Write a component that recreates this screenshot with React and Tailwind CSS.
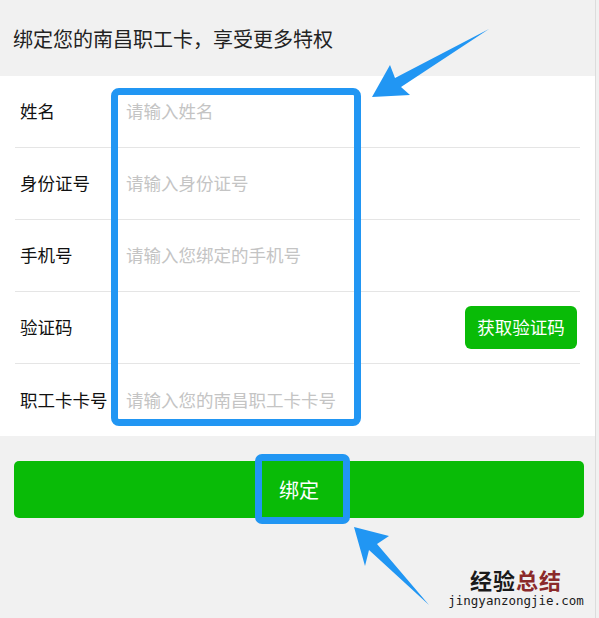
import React from 'react';

const rows = [
  { label: '姓名', placeholder: '请输入姓名' },
  { label: '身份证号', placeholder: '请输入身份证号' },
  { label: '手机号', placeholder: '请输入您绑定的手机号' },
  { label: '验证码', placeholder: '', code: true },
  { label: '职工卡卡号', placeholder: '请输入您的南昌职工卡卡号' },
];

const App = () => {
  return (
    <div
      className="relative w-[599px] h-[618px] overflow-hidden bg-[#f1f1f1] text-[#111]"
      style={{ fontFamily: '"Noto Sans CJK SC", "Noto Sans", sans-serif' }}
    >
      {/* Header */}
      <div className="h-[76px] pl-[13px] pt-[24px] text-[20px] leading-[30px] text-[#222]">
        绑定您的南昌职工卡，享受更多特权
      </div>

      {/* Form */}
      <div className="bg-white mr-[4px]">
        {rows.map((row, i) => (
          <div
            key={i}
            className={`mx-[15px] h-[72px] flex items-center ${i < rows.length - 1 ? 'border-b border-[#e5e5e5]' : ''}`}
          >
            <span className="w-[111px] pl-[5px] text-[17.5px] text-[#111]">{row.label}</span>
            <input
              type="text"
              placeholder={row.placeholder}
              className="flex-1 min-w-0 text-[17.5px] outline-none bg-transparent placeholder:text-[#c4c4c4]"
            />
            {row.code && (
              <button className="mr-[3px] w-[112px] h-[43px] rounded-[6px] bg-[#09bb07] text-white text-[17.5px]">
                获取验证码
              </button>
            )}
          </div>
        ))}
      </div>

      {/* Submit */}
      <div className="px-[14px] pt-[25px] mr-[1px]">
        <button className="w-full h-[57px] rounded-[5px] bg-[#09bb07] text-white text-[20px]">
          绑定
        </button>
      </div>

      {/* Right window edge */}
      <div className="absolute top-0 right-[3px] w-px h-full bg-[#dcdcdc]" />

      {/* Annotation boxes */}
      <div className="absolute left-[111px] top-[88px] w-[250px] h-[338px] border-[7px] border-[#2196f3] rounded-[8px]" />
      <div className="absolute left-[255px] top-[454px] w-[95px] h-[70px] border-[7px] border-[#2196f3] rounded-[7px]" />

      {/* Annotation arrows */}
      <svg className="absolute left-0 top-0" width="599" height="618" viewBox="0 0 599 618">
        <polygon points="372,97 390,65 395,78 489,29 401,87 410,95" fill="#2196f3" />
        <polygon points="354,527 389,536 377,544 429,605 369,550 365,566" fill="#2196f3" />
      </svg>

      {/* Watermark */}
      <div className="absolute left-[446px] top-[567px] w-[140px] flex flex-col items-center">
        <div className="h-[24px] text-[22px] leading-[24px] font-bold tracking-[1px]">
          <span className="text-[#1a1a1a]">经验</span>
          <span className="text-[#8b2a2a]">总结</span>
        </div>
        <div
          className="mt-[3px] text-[12.5px] leading-[14px] text-[#1a1a1a]"
          style={{ fontFamily: '"DejaVu Sans Mono", monospace' }}
        >
          jingyanzongjie.com
        </div>
      </div>
    </div>
  );
};

export default App;
